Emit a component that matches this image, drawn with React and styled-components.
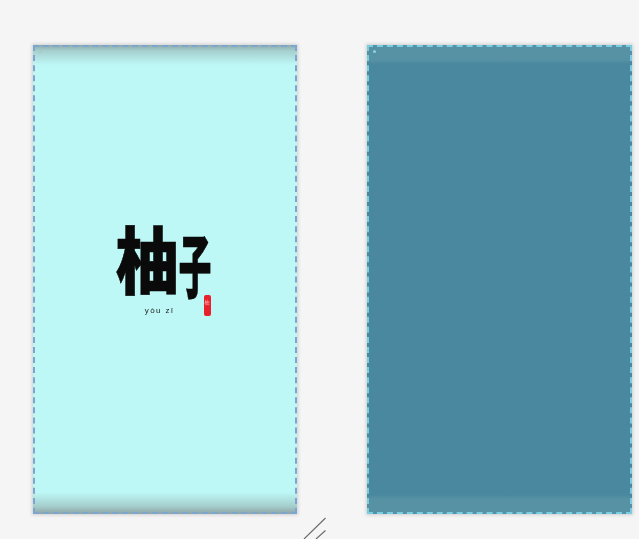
import React from "react";
import styled, { createGlobalStyle } from "styled-components";

const Global = createGlobalStyle`
  html, body { margin: 0; padding: 0; height: 539px; overflow: hidden; background: #f5f5f5; }
  #root { height: 539px; }
`;

const Stage = styled.main`
  position: relative;
  box-sizing: border-box;
  width: 639px;
  height: 539px;
  padding: 45px 7px 25px 33px;
  display: flex;
  gap: 70px;
  overflow: hidden;
  background: #f5f5f5;
`;

const Screen = styled.section`
  flex: 0 0 ${(p) => p.$width}px;
  box-sizing: border-box;
  position: relative;
  display: flex;
  flex-direction: column;
  align-items: center;
  justify-content: center;
  border: 2px dashed ${(p) => p.$edge};
  background: ${(p) => p.$bg};
  background-origin: border-box;
  box-shadow: 0 0 3px 1px rgba(120, 120, 120, 0.3);
  filter: blur(0.6px);
`;

const Logo = styled.div`
  position: relative;
  box-sizing: border-box;
  width: 100px;
  height: 100px;
  margin-bottom: 6px;
  margin-right: 3px;
  display: flex;
  flex-direction: column;
  align-items: center;
`;

const LogoGlyphs = styled.div`
  display: flex;
  justify-content: center;
  height: 76px;
`;

const Glyph = styled.span`
  display: flex;
  justify-content: center;
  width: ${(p) => p.$width}px;
  height: 76px;
  font-family: "Noto Sans CJK SC", sans-serif;
  font-weight: 900;
  font-size: 60px;
  line-height: 76px;
  color: #0a0a0a;
  white-space: nowrap;
  transform: translateY(${(p) => p.$shift}px) scale(${(p) => p.$sx}, ${(p) => p.$sy});
  transform-origin: center;
  -webkit-text-stroke: 0.5px #0a0a0a;
`;

const LogoPinyin = styled.div`
  font-family: "Liberation Sans", sans-serif;
  font-size: 8px;
  line-height: 10px;
  letter-spacing: 1.4px;
  color: #222;
  margin-top: 3px;
  margin-right: 8px;
`;

const Seal = styled.div`
  position: absolute;
  left: 90px;
  top: 68px;
  width: 7px;
  height: 21px;
  border-radius: 2px;
  background: #e8202c;
  color: #f6b9b9;
  font-family: "Noto Sans CJK SC", sans-serif;
  font-size: 5px;
  line-height: 7px;
  text-align: center;
  padding-top: 3px;
  box-sizing: border-box;
  overflow: hidden;
`;

const Dot = styled.span`
  position: absolute;
  left: 4px;
  top: 3px;
  width: 3px;
  height: 3px;
  border-radius: 50%;
  background: ${(p) => p.$color};
`;

const Handle = styled.svg`
  position: absolute;
  left: 300px;
  top: 515px;
  width: 30px;
  height: 24px;
`;

export default function App() {
  return (
    <>
      <Global />
      <Stage>
        <Screen
          $width={264}
          $edge="#7ba6cf"
          $bg="linear-gradient(180deg, #8fa9a9 0, #a6d0cf 6px, #bdf8f6 20px, #bdf8f6 calc(100% - 22px), #a5cfce calc(100% - 8px), #8fa3a3 100%)"
        >
          <Dot $color="#a9c9c9" />
          <Logo>
            <LogoGlyphs>
              <Glyph $width={63} $shift={-9} $sx={1.06} $sy={1.22}>柚</Glyph>
              <Glyph $width={32} $shift={-2} $sx={0.55} $sy={1.16}>子</Glyph>
            </LogoGlyphs>
            <LogoPinyin>yòu zǐ</LogoPinyin>
            <Seal>柚</Seal>
          </Logo>
        </Screen>
        <Screen
          $width={265}
          $edge="#78cde2"
          $bg="linear-gradient(180deg, #5692a4 0, #5692a4 15px, #4a889f 19px, #4a889f calc(100% - 19px), #5692a4 calc(100% - 15px), #5692a4 100%)"
        >
          <Dot $color="#8fd0de" />
        </Screen>
        <Handle viewBox="0 0 30 24" aria-hidden="true">
          <path d="M25.500 3 L4 24 M25.500 15.500 L16 24" stroke="#6f6f6f" strokeWidth="1.2" fill="none" />
        </Handle>
      </Stage>
    </>
  );
}
